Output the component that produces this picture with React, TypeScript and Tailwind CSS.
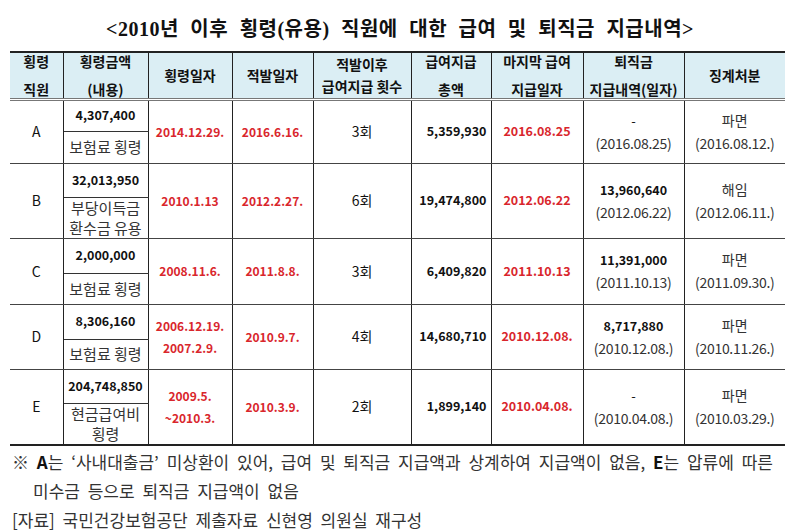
import React from "react";

const RED = "text-[#d9262c]";

type Row = {
  id: string;
  amt: string;
  desc: string[];
  d1: string[];
  d2: string;
  cnt: string;
  total: string;
  last: string;
  sev: string[];
  sevBold: boolean;
  disc: string[];
  hTop: string;
  hBot: string;
};

const rows: Row[] = [
  { id: "A", amt: "4,307,400", desc: ["보험료 횡령"], d1: ["2014.12.29."], d2: "2016.6.16.", cnt: "3회", total: "5,359,930", last: "2016.08.25", sev: ["-", "(2016.08.25)"], sevBold: false, disc: ["파면", "(2016.08.12.)"], hTop: "h-[32px]", hBot: "h-[32px]" },
  { id: "B", amt: "32,013,950", desc: ["부당이득금", "환수금 유용"], d1: ["2010.1.13"], d2: "2012.2.27.", cnt: "6회", total: "19,474,800", last: "2012.06.22", sev: ["13,960,640", "(2012.06.22)"], sevBold: true, disc: ["해임", "(2012.06.11.)"], hTop: "h-[34px]", hBot: "h-[40px]" },
  { id: "C", amt: "2,000,000", desc: ["보험료 횡령"], d1: ["2008.11.6."], d2: "2011.8.8.", cnt: "3회", total: "6,409,820", last: "2011.10.13", sev: ["11,391,000", "(2011.10.13)"], sevBold: true, disc: ["파면", "(2011.09.30.)"], hTop: "h-[35px]", hBot: "h-[31px]" },
  { id: "D", amt: "8,306,160", desc: ["보험료 횡령"], d1: ["2006.12.19.", "2007.2.9."], d2: "2010.9.7.", cnt: "4회", total: "14,680,710", last: "2010.12.08.", sev: ["8,717,880", "(2010.12.08.)"], sevBold: true, disc: ["파면", "(2010.11.26.)"], hTop: "h-[35px]", hBot: "h-[30px]" },
  { id: "E", amt: "204,748,850", desc: ["현금급여비", "횡령"], d1: ["2009.5.", "~2010.3."], d2: "2010.3.9.", cnt: "2회", total: "1,899,140", last: "2010.04.08.", sev: ["-", "(2010.04.08.)"], sevBold: false, disc: ["파면", "(2010.03.29.)"], hTop: "h-[34px]", hBot: "h-[41px]" },
];

const vb = "border-r border-[#222]";

function H2({ a, b, gap }: { a: string; b: string; gap: string }) {
  return (
    <div className={`flex flex-col items-center leading-[16px] ${gap}`}>
      <div>{a}</div>
      <div>{b}</div>
    </div>
  );
}

export default function App() {
  return (
    <div
      className="w-[800px] h-[531px] bg-white text-[#111] overflow-hidden"
      style={{ fontFamily: "'Noto Sans CJK KR', 'Noto Sans', sans-serif" }}
    >
      <div className="h-[51px] flex items-center justify-center pt-[6px]">
        <h1
          className="text-[20px] font-bold tracking-[0.5px] [word-spacing:6px]"
          style={{ fontFamily: "'Liberation Serif', 'Noto Sans CJK KR', serif" }}
        >
          &lt;2010년 이후 횡령(유용) 직원에 대한 급여 및 퇴직금 지급내역&gt;
        </h1>
      </div>

      <table className="ml-[10px] w-[775px] table-fixed border-collapse">
        <colgroup>
          <col className="w-[53px]" />
          <col className="w-[85px]" />
          <col className="w-[84px]" />
          <col className="w-[81px]" />
          <col className="w-[98px]" />
          <col className="w-[80px]" />
          <col className="w-[92px]" />
          <col className="w-[101px]" />
          <col className="w-[101px]" />
        </colgroup>
        <thead>
          <tr className="h-[47px] bg-[#dbeef4] border-t-2 border-t-[#222] border-b-[3px] border-b-[#777] border-double text-[14px] text-center">
            <th className={`${vb} p-0 font-bold`}><H2 a="횡령" b="직원" gap="gap-[12px]" /></th>
            <th className={`${vb} p-0 font-bold`}><H2 a="횡령금액" b="(내용)" gap="gap-[12px]" /></th>
            <th className={`${vb} p-0 font-bold`}>횡령일자</th>
            <th className={`${vb} p-0 font-bold`}>적발일자</th>
            <th className={`${vb} p-0 font-bold`}><H2 a="적발이후" b="급여지급 횟수" gap="gap-[6px]" /></th>
            <th className={`${vb} p-0 font-bold`}><H2 a="급여지급" b="총액" gap="gap-[12px]" /></th>
            <th className={`${vb} p-0 font-bold`}><H2 a="마지막 급여" b="지급일자" gap="gap-[12px]" /></th>
            <th className={`${vb} p-0 font-bold`}><H2 a="퇴직금" b="지급내역(일자)" gap="gap-[12px]" /></th>
            <th className="p-0 font-bold">징계처분</th>
          </tr>
        </thead>
        <tbody>
          {rows.map((r, i) => {
            const bb = i === rows.length - 1 ? "border-b-2 border-b-[#222]" : "border-b border-b-[#444]";
            return (
              <React.Fragment key={r.id}>
                <tr className={`${r.hTop} text-center`}>
                  <td rowSpan={2} className={`${vb} p-0 text-[14px] ${bb}`}>{r.id}</td>
                  <td className={`${vb} p-0 border-b border-b-[#333] text-[12.5px] font-bold`}>{r.amt}</td>
                  <td rowSpan={2} className={`${vb} p-0 ${RED} text-[12px] font-bold leading-[22px] ${bb}`}>
                    {r.d1.map((d) => (<div key={d}>{d}</div>))}
                  </td>
                  <td rowSpan={2} className={`${vb} p-0 ${RED} text-[12px] font-bold ${bb}`}>{r.d2}</td>
                  <td rowSpan={2} className={`${vb} p-0 text-[14px] ${bb}`}>{r.cnt}</td>
                  <td rowSpan={2} className={`${vb} p-0 text-right pr-[4px] text-[12.5px] font-bold ${bb}`}>{r.total}</td>
                  <td rowSpan={2} className={`${vb} p-0 ${RED} text-[12.5px] font-bold ${bb}`}>{r.last}</td>
                  <td rowSpan={2} className={`${vb} p-0 leading-[22px] ${bb}`}>
                    <div className={r.sevBold ? "text-[12.5px] font-bold" : "text-[13px]"}>{r.sev[0]}</div>
                    <div className="text-[14px] text-[#333] tracking-[-0.3px]">{r.sev[1]}</div>
                  </td>
                  <td rowSpan={2} className={`p-0 leading-[23px] text-[14px] text-[#333] ${bb}`}>
                    <div>{r.disc[0]}</div>
                    <div className="tracking-[-0.3px]">{r.disc[1]}</div>
                  </td>
                </tr>
                <tr className={`${r.hBot} text-center`}>
                  <td className={`${vb} p-0 text-[15px] text-[#333] leading-[20px] ${bb}`}>
                    {r.desc.map((d) => (<div key={d}>{d}</div>))}
                  </td>
                </tr>
              </React.Fragment>
            );
          })}
        </tbody>
      </table>

      <div className="pl-[12px] pt-[1px] text-[17px] text-[#333] leading-[29px] [word-spacing:4px]">
        <div className="whitespace-nowrap">※ <b className="text-[#111]">A</b>는 ‘사내대출금’ 미상환이 있어, 급여 및 퇴직금 지급액과 상계하여 지급액이 없음, <b className="text-[#111]">E</b>는 압류에 따른</div>
        <div className="pl-[21px]">미수금 등으로 퇴직금 지급액이 없음</div>
        <div>[자료] 국민건강보험공단 제출자료 신현영 의원실 재구성</div>
      </div>
    </div>
  );
}
